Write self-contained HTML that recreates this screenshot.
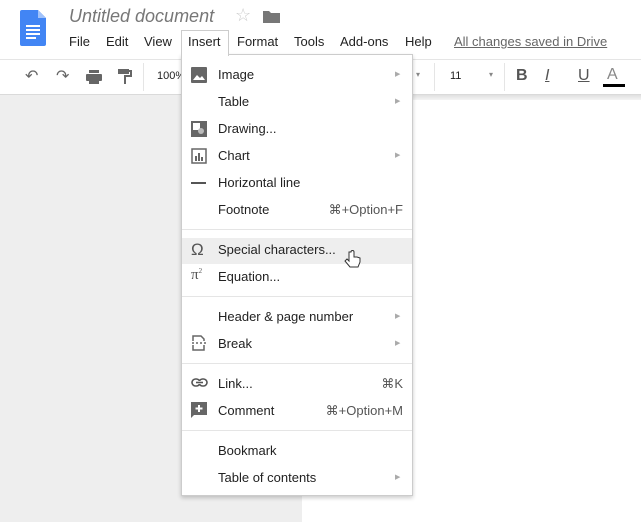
<!DOCTYPE html>
<html><head><style>
body{margin:0;width:641px;height:522px;overflow:hidden;background:#eeeeee;font-family:"Liberation Sans",Arial,sans-serif;position:relative;color:#222}
.hdr{position:absolute;left:0;top:0;width:641px;height:59px;background:#fff}
.tb{position:absolute;left:0;top:59px;width:641px;height:36px;background:#fff;border-top:1px solid #e5e5e5;border-bottom:1px solid #dadada;box-sizing:border-box}
.page{position:absolute;left:302px;top:100px;width:339px;height:422px;background:#fff}
.shadow{position:absolute;left:302px;top:95px;width:339px;height:5px;background:linear-gradient(#e0e0e0,#f4f4f4)}
.t{position:absolute;white-space:nowrap}
.menu{position:absolute;left:181px;top:54px;width:232px;height:442px;background:#fff;border:1px solid #ccc;box-sizing:border-box;box-shadow:0 2px 4px rgba(0,0,0,.2)}
.it{position:absolute;left:36px;font-size:13px;color:#222}
.sc{position:absolute;right:9px;font-size:13px;color:#555}
.ar{position:absolute;left:213px;font-size:7px;color:#aaa}
.sep{position:absolute;left:0;width:230px;height:1px;background:#e5e5e5}
.ic{position:absolute;left:9px}
</style></head><body>
<div class="hdr"></div>
<div class="tb"></div>
<div class="shadow"></div>
<div class="page"></div>
<!-- doc logo -->
<svg style="position:absolute;left:20px;top:10px" width="26" height="36" viewBox="0 0 26 36"><path d="M2 0h16l8 8v26a2 2 0 0 1-2 2H2a2 2 0 0 1-2-2V2a2 2 0 0 1 2-2z" fill="#4285f4"/><path d="M18 0v8h8z" fill="#a1c2fa"/><rect x="6" y="15" width="14" height="2" fill="#fff"/><rect x="6" y="19" width="14" height="2" fill="#fff"/><rect x="6" y="23" width="14" height="2" fill="#fff"/><rect x="6" y="27" width="10" height="2" fill="#fff"/></svg>
<div class="t" style="left:69px;top:6px;font-size:18px;font-style:italic;color:#777">Untitled document</div>
<div class="t" style="left:235px;top:5px;font-size:18px;color:#ccc">☆</div>
<svg style="position:absolute;left:263px;top:10px" width="17" height="13"><path d="M0 1h6l2 2h9v10H0z" fill="#777"/></svg>
<div class="t" style="left:69px;top:34px;font-size:13px">File</div>
<div class="t" style="left:106px;top:34px;font-size:13px">Edit</div>
<div class="t" style="left:144px;top:34px;font-size:13px">View</div>
<div style="position:absolute;left:181px;top:30px;width:48px;height:26px;border:1px solid #ccc;border-bottom:none;background:#fff;box-sizing:border-box;z-index:3"></div>
<div class="t" style="left:188px;top:34px;font-size:13px;z-index:4">Insert</div>
<div class="t" style="left:237px;top:34px;font-size:13px">Format</div>
<div class="t" style="left:294px;top:34px;font-size:13px">Tools</div>
<div class="t" style="left:340px;top:34px;font-size:13px">Add-ons</div>
<div class="t" style="left:405px;top:34px;font-size:13px">Help</div>
<div class="t" style="left:454px;top:34px;font-size:13px;color:#666;text-decoration:underline">All changes saved in Drive</div>
<!-- toolbar -->
<div class="t" style="left:25px;top:66px;font-size:16px;color:#666">↶</div>
<div class="t" style="left:56px;top:66px;font-size:16px;color:#666">↷</div>
<svg style="position:absolute;left:86px;top:70px" width="16" height="14"><rect x="3" y="0" width="10" height="3" fill="#666"/><rect x="0" y="4" width="16" height="7" rx="1" fill="#666"/><rect x="3" y="9" width="10" height="5" fill="#666"/></svg>
<svg style="position:absolute;left:118px;top:69px" width="14" height="15"><rect x="0" y="0" width="11" height="5" fill="#666"/><path d="M11 2h2v5H7v8" stroke="#666" stroke-width="2" fill="none"/></svg>
<div style="position:absolute;left:143px;top:63px;width:1px;height:28px;background:#e5e5e5"></div>
<div class="t" style="left:157px;top:70px;font-size:11px">100%</div>
<div class="t" style="left:416px;top:70px;font-size:8px;color:#888">▾</div>
<div style="position:absolute;left:434px;top:63px;width:1px;height:28px;background:#e5e5e5"></div>
<div class="t" style="left:450px;top:70px;font-size:11px">11</div>
<div class="t" style="left:489px;top:70px;font-size:8px;color:#888">▾</div>
<div style="position:absolute;left:504px;top:63px;width:1px;height:28px;background:#e5e5e5"></div>
<div class="t" style="left:516px;top:67px;font-size:16px;font-weight:bold;color:#555">B</div>
<div class="t" style="left:545px;top:67px;font-size:16px;font-style:italic;color:#555;text-decoration:underline">I</div>
<div class="t" style="left:578px;top:67px;font-size:16px;color:#555;text-decoration:underline">U</div>
<div class="t" style="left:607px;top:66px;font-size:16px;color:#888">A</div>
<div style="position:absolute;left:603px;top:84px;width:22px;height:3px;background:#000"></div>
<!-- menu -->
<div class="menu">
<div style="position:absolute;left:0;top:183px;width:230px;height:26px;background:#eeeeee"></div>
<svg class="ic" style="top:12px" width="16" height="16"><rect width="16" height="16" rx="1" fill="#666"/><path d="M2 13l4-5 3 3 2-2 3 4z" fill="#fff"/></svg>
<div class="it" style="top:12px">Image</div><div class="ar" style="top:15px">▶</div>
<div class="it" style="top:39px">Table</div><div class="ar" style="top:42px">▶</div>
<svg class="ic" style="top:66px" width="16" height="16"><rect width="16" height="16" fill="#666"/><rect x="2" y="2" width="7" height="7" fill="#fff"/><circle cx="10" cy="10" r="3" fill="#bbb"/></svg>
<div class="it" style="top:66px">Drawing...</div>
<svg class="ic" style="top:93px" width="16" height="16"><rect x="1" y="1" width="14" height="14" fill="none" stroke="#666" stroke-width="1.5"/><rect x="4" y="8" width="2" height="5" fill="#666"/><rect x="7" y="5" width="2" height="8" fill="#666"/><rect x="10" y="9" width="2" height="4" fill="#666"/></svg>
<div class="it" style="top:93px">Chart</div><div class="ar" style="top:96px">▶</div>
<div style="position:absolute;left:9px;top:127px;width:15px;height:2px;background:#555"></div>
<div class="it" style="top:120px">Horizontal line</div>
<div class="it" style="top:147px">Footnote</div><div class="sc" style="top:147px">⌘+Option+F</div>
<div class="sep" style="top:174px"></div>
<div class="ic" style="top:185px;font-size:17px;color:#555">Ω</div>
<div class="it" style="top:187px">Special characters...</div>
<div class="ic" style="top:212px;font-size:15px;color:#555;font-family:'Liberation Serif',serif">π<sup style="font-size:7px">2</sup></div>
<div class="it" style="top:214px">Equation...</div>
<div class="sep" style="top:241px"></div>
<div class="it" style="top:254px">Header &amp; page number</div><div class="ar" style="top:257px">▶</div>
<svg class="ic" style="top:280px" width="16" height="16"><path d="M2 6V1h8l3 3v2M2 10v5h11v-5" fill="none" stroke="#666" stroke-width="1.5"/><path d="M1 8h2M5 8h2M9 8h2M13 8h2" stroke="#666" stroke-width="1.5"/></svg>
<div class="it" style="top:281px">Break</div><div class="ar" style="top:284px">▶</div>
<div class="sep" style="top:308px"></div>
<svg class="ic" style="top:323px" width="17" height="10"><rect x="1" y="1" width="8" height="7" rx="3.5" fill="none" stroke="#555" stroke-width="1.6"/><rect x="8" y="1" width="8" height="7" rx="3.5" fill="none" stroke="#555" stroke-width="1.6"/><rect x="6" y="3" width="5" height="3" fill="#fff"/><path d="M5 4.5h7" stroke="#555" stroke-width="1.6"/></svg>
<div class="it" style="top:321px">Link...</div><div class="sc" style="top:321px">⌘K</div>
<svg class="ic" style="top:347px" width="16" height="17"><path d="M0 0h16v13H3l-3 3z" fill="#666"/><path d="M8 3v7M4.5 6.5h7" stroke="#fff" stroke-width="2"/></svg>
<div class="it" style="top:348px">Comment</div><div class="sc" style="top:348px">⌘+Option+M</div>
<div class="sep" style="top:375px"></div>
<div class="it" style="top:388px">Bookmark</div>
<div class="it" style="top:415px">Table of contents</div><div class="ar" style="top:418px">▶</div>
</div>
<svg style="position:absolute;left:344px;top:250px" width="18" height="20"><path d="M5 2v9l-2-2-2 2 5 6h8l2-5v-4l-3-1-2 0-1 0V2a1.5 1.5 0 0 0-3 0z" fill="#fff" stroke="#333" stroke-width="1"/></svg>
</body></html>
